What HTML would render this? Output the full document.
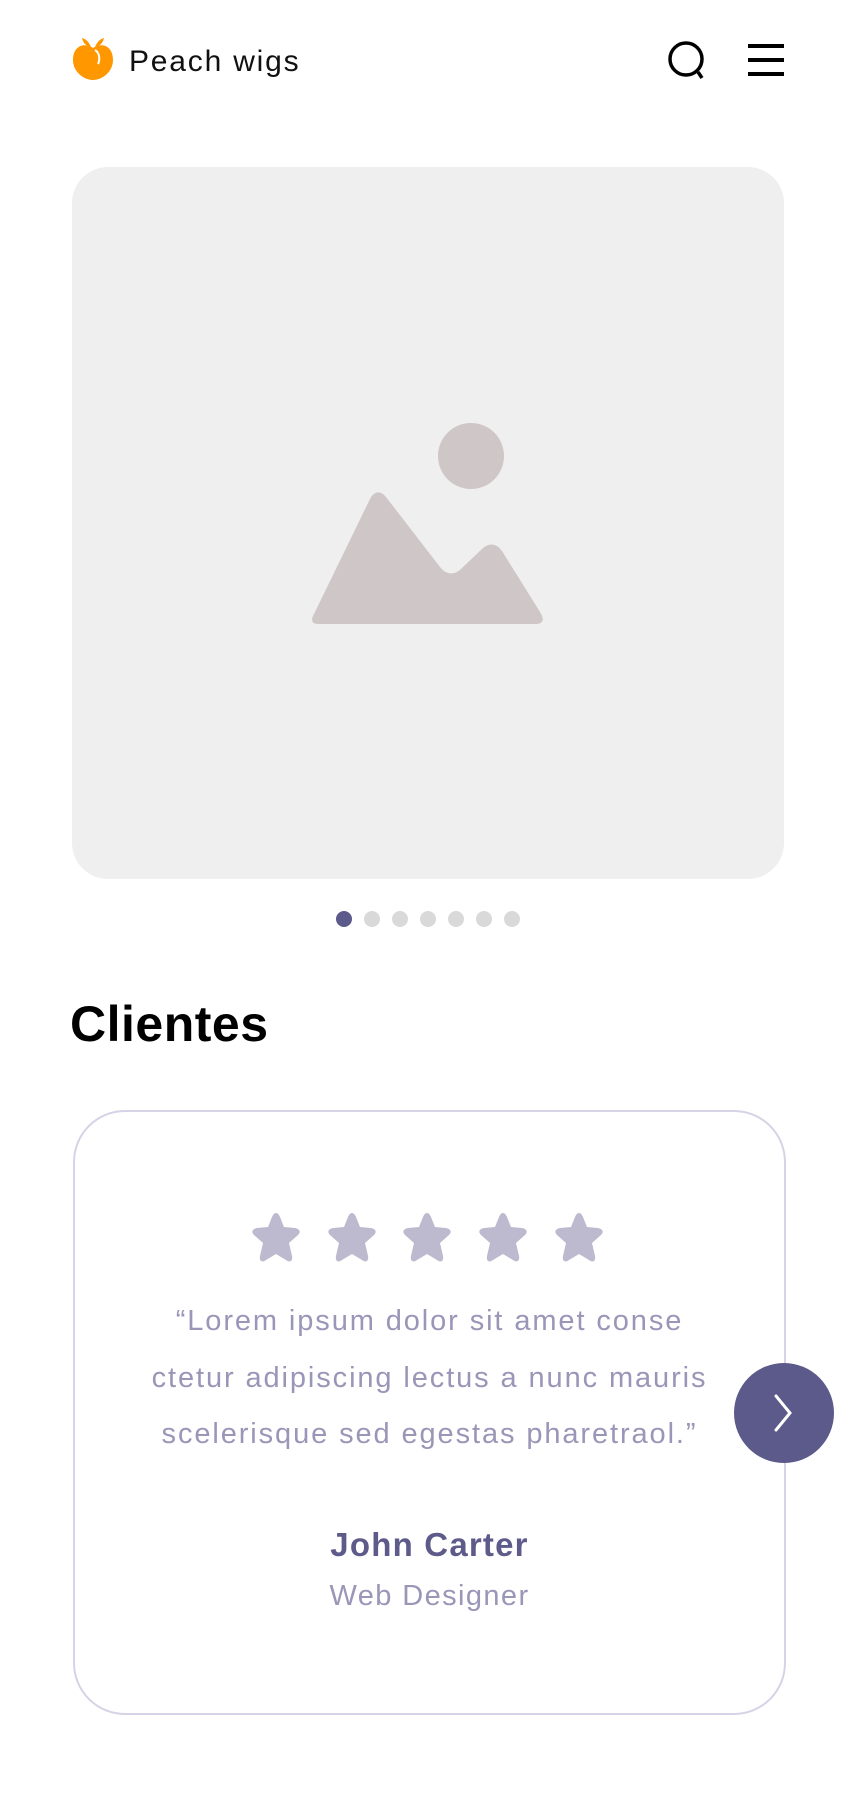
<!DOCTYPE html>
<html><head><meta charset="utf-8"><style>
*{margin:0;padding:0;box-sizing:border-box}
body{width:856px;height:1810px;background:#fff;font-family:"Liberation Sans",sans-serif;position:relative;overflow:hidden}
.abs{position:absolute}
.q{position:absolute;left:73px;width:713px;text-align:center;font-size:29px;letter-spacing:1.9px;color:#9a96b8;white-space:nowrap}
</style></head><body>
<svg class="abs" style="left:70px;top:36px" width="46" height="46" viewBox="0 0 46 46">
<path d="M12 2 C16 3 19 6 21 11 C16 10 13 7 12 2 Z M34 2 C30 3 27 6 25 11 C30 10 33 7 34 2 Z" fill="#ff9800"/>
<path d="M23 12 C14 6 3 10 3 24 C3 36 14 44 23 44 C32 44 43 36 43 24 C43 10 32 6 23 12 Z" fill="#ff9800"/>
<path d="M25 14 C30 17 30 24 28 28" stroke="#fff" stroke-width="2" fill="none"/>
</svg>
<div class="abs" style="left:129px;top:45px;font-size:30px;color:#111;letter-spacing:1.8px">Peach wigs</div>
<svg class="abs" style="left:665px;top:38px" width="46" height="46" viewBox="0 0 46 46">
<circle cx="21" cy="21" r="16" stroke="#000" stroke-width="3.5" fill="none"/>
<path d="M33 34 L37 40" stroke="#000" stroke-width="3.5"/>
</svg>
<div class="abs" style="left:748px;top:44px;width:36px;height:4px;background:#000"></div>
<div class="abs" style="left:748px;top:58px;width:36px;height:4px;background:#000"></div>
<div class="abs" style="left:748px;top:72px;width:36px;height:4px;background:#000"></div>

<div class="abs" style="left:72px;top:167px;width:712px;height:712px;background:#efefef;border-radius:36px"></div>
<svg class="abs" style="left:300px;top:410px" width="260" height="230" viewBox="300 410 260 230">
<circle cx="471" cy="456" r="33" fill="#cfc6c7"/>
<path d="M318 624 C311 624 311 619 314 614 L370 499 C374 491 380 490 386 497 L440 567 C447 576 456 575 463 567 L483 548 C490 542 497 544 502 551 L540 612 C545 620 543 624 535 624 Z" fill="#cfc6c7"/>
</svg>

<div class="abs" style="left:336px;top:911px;width:16px;height:16px;border-radius:50%;background:#5c5a8a"></div>
<div class="abs" style="left:364px;top:911px;width:16px;height:16px;border-radius:50%;background:#d9d9d9"></div>
<div class="abs" style="left:392px;top:911px;width:16px;height:16px;border-radius:50%;background:#d9d9d9"></div>
<div class="abs" style="left:420px;top:911px;width:16px;height:16px;border-radius:50%;background:#d9d9d9"></div>
<div class="abs" style="left:448px;top:911px;width:16px;height:16px;border-radius:50%;background:#d9d9d9"></div>
<div class="abs" style="left:476px;top:911px;width:16px;height:16px;border-radius:50%;background:#d9d9d9"></div>
<div class="abs" style="left:504px;top:911px;width:16px;height:16px;border-radius:50%;background:#d9d9d9"></div>

<div class="abs" style="left:70px;top:995px;font-size:50px;font-weight:bold;color:#000;letter-spacing:0.5px">Clientes</div>

<div class="abs" style="left:73px;top:1110px;width:713px;height:605px;border:2px solid #d5d3e6;border-radius:52px"></div>
<svg class="abs" style="left:240px;top:1210px" width="380" height="58" viewBox="0 0 380 58">
<defs><path id="s" d="M26 3 C28 3 29 5 30 7 L34 17 L45 18 C50 19 51 22 48 25 L39 33 L42 46 C43 51 40 53 36 50 L26 44 L16 50 C12 53 9 51 10 46 L13 33 L4 25 C1 22 2 19 7 18 L18 17 L22 7 C23 5 24 3 26 3 Z" fill="#bdb9cf"/></defs>
<use href="#s" x="10"/><use href="#s" x="86"/><use href="#s" x="161"/><use href="#s" x="237"/><use href="#s" x="313"/>
</svg>
<div class="q" style="top:1305px">“Lorem ipsum dolor sit amet conse</div>
<div class="q" style="top:1362px">ctetur adipiscing lectus a nunc mauris</div>
<div class="q" style="top:1418px">scelerisque sed egestas pharetraol.”</div>
<div class="abs" style="left:73px;width:713px;text-align:center;top:1526px;font-size:33px;font-weight:bold;color:#5e5a8a;letter-spacing:1.2px">John Carter</div>
<div class="abs" style="left:73px;width:713px;text-align:center;top:1580px;font-size:29px;color:#9a96b8;letter-spacing:1.4px">Web Designer</div>

<div class="abs" style="left:734px;top:1363px;width:100px;height:100px;border-radius:50%;background:#5c5a8a"></div>
<svg class="abs" style="left:770px;top:1393px" width="28" height="40" viewBox="0 0 28 40">
<path d="M6 3 L20 20 L6 37" stroke="#fff" stroke-width="3" fill="none" stroke-linecap="round"/>
</svg>
</body></html>
